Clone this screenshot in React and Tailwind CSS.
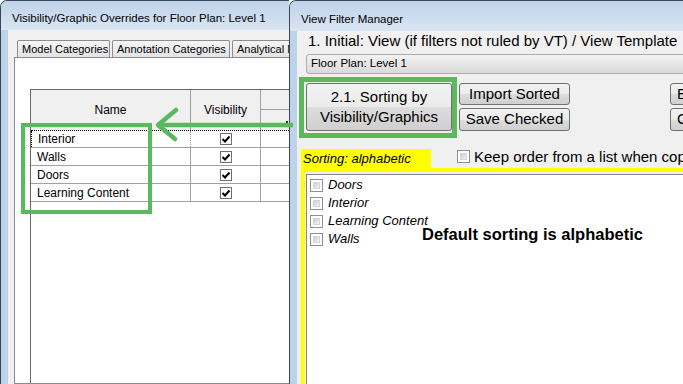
import React from "react";

const font = "font-['Liberation_Sans',Arial,sans-serif]";
const btn =
  "border border-[#707070] rounded-[3px] bg-[linear-gradient(#f2f2f2_0%,#ebebeb_50%,#dddddd_51%,#cfcfcf_100%)] flex items-center justify-center text-[15px] text-black";
const titleBar = "bg-[linear-gradient(#bfd3e9,#d9e5f3)] flex items-center pt-[7px] text-[11.5px] text-black";

function GridCheck() {
  return (
    <div className="w-[12px] h-[12px] border border-[#6f6f6f] bg-white flex items-center justify-center">
      <svg width="10" height="10" viewBox="0 0 10 10">
        <path d="M1.5 5 L4 7.5 L8.5 2.5" fill="none" stroke="#000" strokeWidth="2" />
      </svg>
    </div>
  );
}

function EmptyCheck() {
  return (
    <div className="w-[13px] h-[13px] shrink-0 border border-[#8e8f8f] bg-white p-[2px]">
      <div className="w-full h-full bg-[linear-gradient(135deg,#c8ccd2,#f4f4f4)] border border-[#d6d6d6]" />
    </div>
  );
}

function LeftWindow() {
  const rows = ["Interior", "Walls", "Doors", "Learning Content"];
  return (
    <div className="w-[289px] shrink-0 h-[384px] flex flex-col bg-[#bdd3ea] border-l border-t border-[#3a4656] rounded-tl-[7px] overflow-hidden">
      <div className={`${titleBar} h-[29px] pl-[11px]`}>Visibility/Graphic Overrides for Floor Plan: Level 1</div>
      <div className="flex-1 ml-[7px] bg-[#f0f0f0] flex flex-col">
        <div className="flex gap-[2px] pl-[9px] mt-[10px] text-[11px]">
          {["Model Categories", "Annotation Categories", "Analytical Model Categories"].map((t, i) => (
            <div
              key={t}
              className={`h-[17px] shrink-0 border border-b-0 border-[#898c95] rounded-t-[2px] bg-[linear-gradient(#f5f5f5,#e3e3e3)] px-[4px] flex items-center whitespace-nowrap ${i === 0 ? "w-[93px]" : i === 1 ? "w-[118px]" : ""}`}
            >
              {t}
            </div>
          ))}
        </div>
        <div className="flex-1 ml-[6px] bg-white border border-r-0 border-[#898c95] pt-[31px] pl-[15px] flex flex-col">
          <div className="flex-1 border-l border-t border-[#696969] flex flex-col text-[12px]">
            <div className="h-[41px] flex bg-[#f0f0f0] border-b border-dotted border-black">
              <div className="w-[160px] border-r border-[#a0a0a0] flex items-center justify-center">Name</div>
              <div className="w-[70px] border-r border-[#a0a0a0] flex items-center justify-center">Visibility</div>
              <div className="flex-1 flex flex-col">
                <div className="h-[20px] border-b border-[#a0a0a0]" />
                <div className="flex-1 flex justify-end items-center">
                  <div className="w-[2px] h-[5px] bg-[#5a1010] mr-[1px] mt-[6px]" />
                </div>
              </div>
            </div>
            {rows.map((r, i) => (
              <div key={r} className={`${i === 0 ? "h-[17px]" : "h-[18px]"} flex border-b border-[#a0a0a0] bg-white`}>
                <div className={`w-[160px] border-r border-[#a0a0a0] pl-[6px] flex items-center ${i === 0 ? "border-l border-l-black border-dotted pl-[3px]" : ""}`}>
                  {r}
                </div>
                <div className="w-[70px] border-r border-[#a0a0a0] flex items-center justify-center">
                  <GridCheck />
                </div>
                <div className="flex-1" />
              </div>
            ))}
            <div className="flex-1 bg-white" />
          </div>
        </div>
      </div>
    </div>
  );
}

function RightWindow() {
  const items = ["Doors", "Interior", "Learning Content", "Walls"];
  return (
    <div className="flex-1 min-w-0 h-[384px] flex flex-col bg-[#bdd3ea] border-l border-t border-[#3a4656] rounded-tl-[7px] overflow-hidden">
      <div className={`${titleBar} h-[30px] pl-[11px] whitespace-nowrap`}>View Filter Manager</div>
      <div className="flex-1 ml-[7px] bg-[#f0f0f0] flex flex-col whitespace-nowrap">
        <div className="h-[20px] pl-[11px] text-[15px] leading-[20px]">1. Initial: View (if filters not ruled by VT) / View Template</div>
        <div className="mt-[3px] ml-[9px] -mr-[20px] h-[20px] border border-[#acacac] rounded-[3px] bg-[linear-gradient(#f3f3f3,#e6e6e6_50%,#dadada)] pl-[4px] flex items-center text-[11.5px]">
          Floor Plan: Level 1
        </div>
        <div className="mt-[3px] flex items-start">
          <div className="shrink-0 ml-[2px] border-[5px] border-[#5cb85f] pt-[1px] pl-[2px] pb-[2px]">
            <div className={`${btn} w-[146px] h-[48px] flex-col leading-[20px]`}>
              <span>2.1. Sorting by</span>
              <span>Visibility/Graphics</span>
            </div>
          </div>
          <div className="shrink-0 ml-[2px] mt-[6px] flex flex-col gap-[3px]">
            <div className={`${btn} w-[111px] h-[22px]`}>Import Sorted</div>
            <div className={`${btn} w-[111px] h-[23px]`}>Save Checked</div>
          </div>
          <div className="shrink-0 ml-[100px] mt-[6px] flex flex-col gap-[3px]">
            <div className={`${btn} w-[90px] h-[22px] justify-start pl-[6px]`}>Export</div>
            <div className={`${btn} w-[90px] h-[23px] justify-start pl-[6px]`}>Clear</div>
          </div>
        </div>
        <div className="mt-[11px] h-[19px] flex items-start">
          <div className="shrink-0 ml-[4px] w-[130px] h-[19px] bg-[#ffff00] pl-[2px] text-[13px] italic leading-[19px]">Sorting: alphabetic</div>
          <div className="shrink-0 ml-[26px] mt-[1px] flex items-center h-[13px]">
            <EmptyCheck />
            <span className="ml-[4px] text-[15px] leading-[15px]">Keep order from a list when copying filters</span>
          </div>
        </div>
        <div className="flex-1 ml-[4px] border-l-4 border-t-4 border-[#ffff00] pt-[2px] pl-[1px] flex flex-col">
          <div className="relative flex-1 bg-white border border-r-0 border-b-0 border-[#828790] pt-[1px] pl-[3px]">
            {items.map((t) => (
              <div key={t} className="h-[18px] flex items-center">
                <EmptyCheck />
                <span className="ml-[5px] text-[13px] italic">{t}</span>
              </div>
            ))}
            <div className="absolute left-[115px] top-[50px] text-[16.5px] font-bold leading-[18px]">Default sorting is alphabetic</div>
          </div>
        </div>
      </div>
    </div>
  );
}

export default function App() {
  return (
    <div className={`${font} relative w-[683px] h-[384px] overflow-hidden flex bg-white text-black`}>
      <LeftWindow />
      <RightWindow />
      <svg className="absolute inset-0 pointer-events-none" width="683" height="384" viewBox="0 0 683 384">
        <rect x="23" y="125" width="127" height="87" fill="none" stroke="#5cb85f" strokeWidth="4" />
        <line x1="160" y1="125" x2="293" y2="125" stroke="#5cb85f" strokeWidth="4.5" />
        <polyline points="176,110 158,125 175,139" fill="none" stroke="#5cb85f" strokeWidth="4.5" strokeLinecap="round" strokeLinejoin="round" />
      </svg>
    </div>
  );
}
